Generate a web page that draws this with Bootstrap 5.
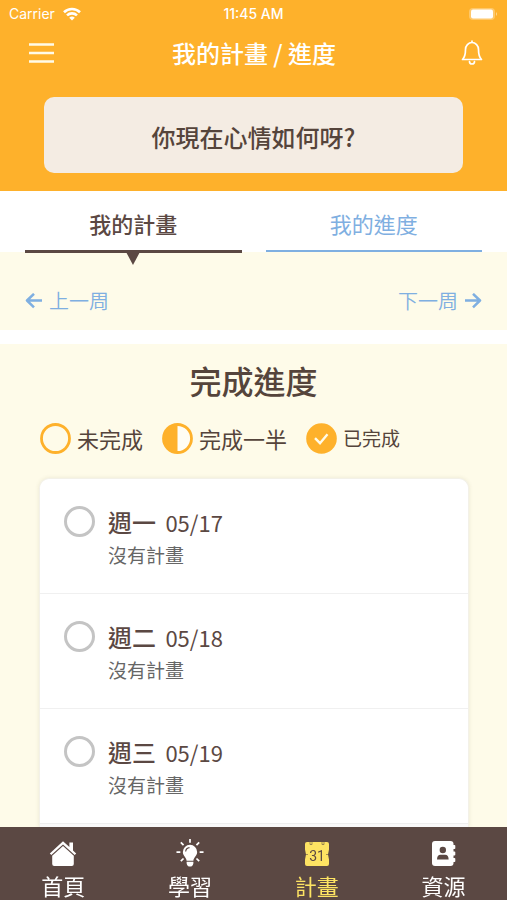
<!DOCTYPE html>
<html lang="zh-Hant">
<head>
<meta charset="utf-8">
<meta name="viewport" content="width=device-width, initial-scale=1">
<title>我的計畫 / 進度</title>
<link href="https://cdn.jsdelivr.net/npm/bootstrap@5.3.0/dist/css/bootstrap.min.css" rel="stylesheet">
<style>
:root{--amber:#feb12b;--cocoa:#5b4843;--cream:#fefbe9;--sky:#7fafe1}
body{font-family:"Noto Sans CJK TC",sans-serif;color:#55443b;background:#fff}
svg{display:block;flex:none}
.bg-amber{background:var(--amber)}
.bg-cream{background:var(--cream)}
.app-head{padding-bottom:18px}
.status{height:28px;padding:0 9px;font:14px/28px Inter,sans-serif}
.status .clock{font-weight:500}
.side{flex:1 1 0}
.title-row{height:49px;padding:0 24px 0 29px}
.title-row h1{font-size:24px;line-height:48px;font-weight:500;padding-right:4px}
.mood{margin:20px 44px 0;height:76px;padding:8px 12px 5px;border-radius:10px;background:#f4ece3;color:#55443b;font-size:24px;font-weight:500}
.mood:hover{background:#f4ece3}
.tab-row{padding:0 25px;gap:24px;height:61px}
.tab-link{font-size:22px;line-height:32px;padding:16px 0 11px;border-bottom:3px solid var(--sky);color:var(--sky);height:62px}
.tab-link.active{color:var(--cocoa);border-color:var(--cocoa);font-weight:500;position:relative}
.tab-link.active::after{content:"";position:absolute;left:50%;top:100%;margin-left:-8px;border:8px solid transparent;border-top:15px solid var(--cocoa);border-bottom:0}
.week-row{padding:34px 25px 14px;font-size:20px;line-height:30px;font-weight:350}
.week-row a{color:var(--sky);gap:7px}
.progress-area{margin-top:14px}
.progress-area h2{font-size:32px;line-height:40px;font-weight:500;padding-top:16px}
.legend-row{padding:0 40px;margin-top:21px;gap:19px;font-size:22px;line-height:34px}
.legend-row li{gap:6px}
.legend-row .short{font-size:19px}
.days{margin:23px 38px 0 39px;border-radius:10px 10px 0 0;border:1px solid #f3f1e8;border-bottom:0;background:#fff;box-shadow:0 0 4px rgba(90,80,40,.12)}
.day{padding:25px 24px 23px;gap:13px}
.day + .day{border-top:1px solid #f0f0f0}
.day h3{font-size:24px;line-height:36px;font-weight:500;color:var(--cocoa)}
.day time{font-size:22px;font-weight:400;margin-left:4px}
.day p{font-size:19px;line-height:30px;color:#666}
.day input{width:31px;height:31px;margin:2px 0 0;border:3px solid #c4c4c4;appearance:none;border-radius:50%;background:#fff;flex:none}
.day input:checked{background:var(--amber);border-color:var(--amber)}
.days-end{height:4px;background:#f9f9f9;border-top:1px solid #eee}
.bottom-bar{background:var(--cocoa);padding-top:12px}
.bottom-bar a{color:#fff;font-size:22px;line-height:30px;gap:3px}
.bottom-bar a.active{color:#fde363}
</style>
<script src="https://cdn.jsdelivr.net/npm/bootstrap@5.3.0/dist/js/bootstrap.bundle.min.js"></script>
</head>
<body class="d-flex flex-column min-vh-100">
<header class="bg-amber text-white app-head d-flex flex-column">
  <div class="status d-flex align-items-center">
    <div class="side d-flex align-items-center gap-2"><span>Carrier</span>
      <svg width="18" height="14" viewBox="0 0 18 14" fill="none" stroke="#fff" stroke-width="2.600" aria-hidden="true"><path d="M1 5.200a11.500 11.500 0 0 1 16 0M4 8.400a7.300 7.300 0 0 1 10 0"/><path d="M9 13.500 6.200 10.700a4.200 4.200 0 0 1 5.600 0z" fill="#fff" stroke="none"/></svg>
    </div>
    <span class="clock">11:45 AM</span>
    <div class="side d-flex justify-content-end">
      <svg width="30" height="14" viewBox="0 0 30 14" aria-hidden="true"><rect x="1" y="1" width="26" height="12" rx="4" fill="#fff" fill-opacity=".3"/><rect x="3" y="2.500" width="22" height="9" rx="2" fill="#fff"/><path d="M28 5q2 2 0 4z" fill="#fff" fill-opacity=".5"/></svg>
    </div>
  </div>
  <div class="title-row d-flex align-items-center">
    <div class="side"><button type="button" class="btn p-0 border-0" aria-label="選單"><svg width="25" height="22" viewBox="0 0 25 22" stroke="#fffbe9" stroke-width="2.600"><path d="M0 1.500h25M0 10h25M0 18.500h25"/></svg></button></div>
    <h1 class="m-0">我的計畫 / 進度</h1>
    <div class="side d-flex justify-content-end"><button type="button" class="btn p-0 border-0" aria-label="通知"><svg width="22" height="26" viewBox="0 0 22 26" fill="none" stroke="#fff" stroke-width="1.700" stroke-linejoin="round" stroke-linecap="round"><path d="M1.500 19.500c2-2 3-3.500 3-10a6.500 7 0 0 1 13 0c0 6.500 1 8 3 10zM11 2.300V1M8.500 21.500a2.500 2.500 0 0 0 5 0"/></svg></button></div>
  </div>
  <button type="button" class="btn mood border-0">你現在心情如何呀?</button>
</header>
<main class="flex-grow-1 d-flex flex-column">
  <nav class="tab-row d-flex text-center" aria-label="分頁">
    <a href="#plan" class="tab-link active text-decoration-none flex-fill w-50" aria-current="page">我的計畫</a>
    <a href="#progress" class="tab-link text-decoration-none flex-fill w-50">我的進度</a>
  </nav>
  <div class="week-row bg-cream d-flex justify-content-between">
    <a href="#prev" class="d-flex align-items-center text-decoration-none"><svg width="17" height="16" viewBox="0 0 17 16" fill="none" stroke="currentColor" stroke-width="2.500" stroke-linejoin="round"><path d="M17 7.500H2M9 .8 2 7.500l7 6.800"/></svg>上一周</a>
    <a href="#next" class="d-flex align-items-center text-decoration-none">下一周<svg width="17" height="16" viewBox="0 0 17 16" fill="none" stroke="currentColor" stroke-width="2.500" stroke-linejoin="round"><path d="M0 7.500h15M8 .8l7 6.700-7 6.800"/></svg></a>
  </div>
  <section class="progress-area bg-cream flex-grow-1">
    <h2 class="text-center mb-0">完成進度</h2>
    <ul class="legend-row list-unstyled d-flex mb-0">
      <li class="d-flex align-items-center"><svg width="31" height="31" viewBox="0 0 31 31"><circle cx="15.500" cy="15.500" r="14" fill="none" stroke="#feb12b" stroke-width="2.800"/></svg>未完成</li>
      <li class="d-flex align-items-center"><svg width="31" height="31" viewBox="0 0 31 31"><circle cx="15.500" cy="15.500" r="14" fill="#fffdf4" stroke="#feb12b" stroke-width="2.800"/><path d="M15.500 1.500a14 14 0 0 0 0 28z" fill="#feb12b"/></svg>完成一半</li>
      <li class="d-flex align-items-center short"><svg width="31" height="31" viewBox="0 0 31 31"><circle cx="15.500" cy="15.500" r="15.300" fill="#feb12b"/><path d="m9 15.200 5 5 7.500-9" fill="none" stroke="#fffbe9" stroke-width="2.400"/></svg>已完成</li>
    </ul>
    <div class="days">
      <div class="day d-flex align-items-start"><input type="checkbox" id="d1"><label for="d1"><h3 class="m-0">週一 <time>05/17</time></h3><p class="m-0">沒有計畫</p></label></div>
      <div class="day d-flex align-items-start"><input type="checkbox" id="d2"><label for="d2"><h3 class="m-0">週二 <time>05/18</time></h3><p class="m-0">沒有計畫</p></label></div>
      <div class="day d-flex align-items-start"><input type="checkbox" id="d3"><label for="d3"><h3 class="m-0">週三 <time>05/19</time></h3><p class="m-0">沒有計畫</p></label></div>
      <div class="days-end"></div>
    </div>
  </section>
</main>
<nav class="bottom-bar d-flex sticky-bottom" aria-label="主選單">
  <a href="#home" class="d-flex flex-column align-items-center text-decoration-none w-25"><svg width="28" height="28" viewBox="0 0 28 28" fill="currentColor"><path d="M14 2.200 .8 14.500l1.500 1.600L14 5.400l11.700 10.700 1.500-1.600-3.200-3V3.500h-3.600v4.600z"/><path d="M14 7 3.200 16.800V25q0 2 2 2h17.600q2 0 2-2v-8.200z"/></svg>首頁</a>
  <a href="#learn" class="d-flex flex-column align-items-center text-decoration-none w-25"><svg width="30" height="28" viewBox="0 1 30 29" fill="currentColor"><path d="M15 7a7.400 7.400 0 0 0-7.400 7.400c0 4.200 3.600 5.200 3.900 9.100h7c.3-3.900 3.900-4.900 3.900-9.100A7.400 7.400 0 0 0 15 7zM11.500 24.500h7v1.500q-.5 3.500-3.500 3.500t-3.500-3.500z"/><path d="M10.500 14a4.500 4.500 0 0 1 4-4" fill="none" stroke="#5b4843" stroke-width="1.200"/><path d="M15 1v4M5.500 4.500l2.800 2.800M24.500 4.500l-2.800 2.800M1 14.500h4M25 14.500h4M5.500 24l2.800-2.800M24.500 24l-2.800-2.800" stroke="currentColor" stroke-width="1.800"/></svg>學習</a>
  <a href="#plans" class="active d-flex flex-column align-items-center text-decoration-none w-25" aria-current="page"><svg width="26" height="28" viewBox="0 0 26 28"><path d="M3 3h20q2 0 2 2v5.500l-1 5 1 5V25q0 2-2 2H3q-2 0-2-2v-4.500l1-5-1-5V5q0-2 2-2z" fill="currentColor"/><path d="M6 3v2.500h2V3M18 3v2.500h2V3M1 15.500h3M22 15.500h3" stroke="#5b4843" stroke-width=".8" fill="none" opacity=".7"/><text x="13" y="22" text-anchor="middle" font-family="Roboto,sans-serif" font-size="14" fill="#5b4843">31</text></svg>計畫</a>
  <a href="#resources" class="d-flex flex-column align-items-center text-decoration-none w-25"><svg width="26" height="28" viewBox="0 0 26 28" fill="currentColor"><rect x="1" y="2" width="21.500" height="25" rx="3"/><path d="M22 6h1.500q.8 0 .8.800v2.400q0 .8-.8.800H22zM22 12.500h1.500q.8 0 .8.800v2.400q0 .8-.8.800H22zM22 19h1.500q.8 0 .8.800v2.400q0 .8-.8.800H22z"/><circle cx="11.800" cy="11" r="3.200" fill="#5b4843"/><path d="M6 20.500q0-4.700 3.500-4.700h4.600q3.500 0 3.500 4.700z" fill="#5b4843"/></svg>資源</a>
</nav>
</body>
</html>
